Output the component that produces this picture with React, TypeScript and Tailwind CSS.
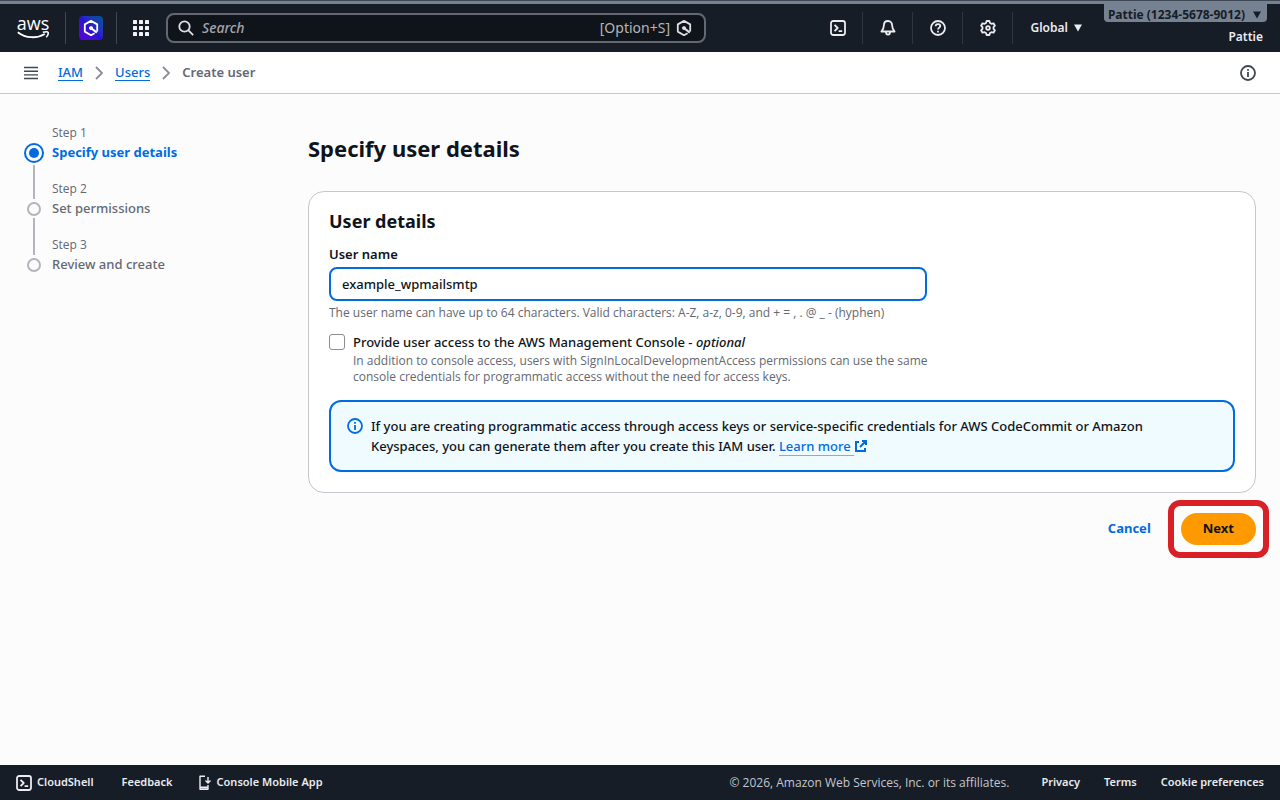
import { useState, type ReactNode } from "react";
import clsx from "clsx";

const steps = [
  { label: "Step 1", title: "Specify user details" },
  { label: "Step 2", title: "Set permissions" },
  { label: "Step 3", title: "Review and create" },
];

function Icon({ children, className }: { children: ReactNode; className?: string }) {
  return (
    <svg
      viewBox="0 0 16 16"
      fill="none"
      stroke="currentColor"
      strokeWidth="1.8"
      strokeLinejoin="round"
      className={clsx("size-4 shrink-0", className)}
      aria-hidden="true"
    >
      {children}
    </svg>
  );
}

function ShellIcon() {
  return (
    <Icon>
      <rect x="1" y="1" width="14" height="14" rx="2.2" />
      <path d="m4.5 4.8 3.2 3.2-3.2 3.2M8.6 11.2h3.6" />
    </Icon>
  );
}

function HexIcon({ className }: { className?: string }) {
  return (
    <Icon className={className}>
      <path d="M11.6 13.3 8 15.2 1.8 11.6V4.4L8 .9l6.2 3.5v7.2" />
      <path d="m8 8 5.8 4.6" strokeWidth="2.2" />
      <path d="M8 5.9 9.9 7v2.1L8 10.2 6.1 9.1V7z" fill="currentColor" stroke="none" />
    </Icon>
  );
}

function InfoIcon() {
  return (
    <Icon>
      <circle cx="8" cy="8" r="7" />
      <path d="M8 7v5M8 4v1.8" />
    </Icon>
  );
}

function Caret() {
  return (
    <svg viewBox="0 0 8 8" className="size-2 shrink-0" fill="currentColor" aria-hidden="true">
      <path d="M0 0.5h8L4 7.5z" />
    </svg>
  );
}

function Chevron() {
  return (
    <svg viewBox="0 0 8 14" className="h-3.5 w-2" fill="none" stroke="#8c8c94" strokeWidth="1.8" aria-hidden="true">
      <path d="m1 1 6 6-6 6" />
    </svg>
  );
}

function AwsLogo() {
  return (
    <a href="#" aria-label="AWS home" className="flex w-8 flex-col items-center text-white">
      <span className="font-['Open_Sans',sans-serif] text-[18px] leading-3 font-medium">aws</span>
      <svg viewBox="0 0 32 8" className="mt-0.5 h-2 w-8" fill="none" stroke="currentColor" aria-hidden="true">
        <path d="M.8 1.2c8 6.2 19 6.6 27 1.8" strokeWidth="1.8" />
        <path d="M25.8 1.3c2.5-.6 5-.5 5.3 0 .3.7-.3 3.3-1.9 5" strokeWidth="1.4" />
      </svg>
    </a>
  );
}

function Header() {
  return (
    <header className="border-t-3 border-[#768291] bg-[#161d26] text-[#ebebf0]">
      <div className="flex h-12 items-center">
        <div className="flex h-8 w-[66px] items-center border-r border-[#424650] pl-[17px]">
          <AwsLogo />
        </div>
        <div className="flex h-8 w-[51px] items-center justify-center border-r border-[#424650]">
          <button
            aria-label="Amazon Q"
            className="flex size-6 items-center justify-center rounded-[4px] bg-linear-to-tr from-[#5a00d8] via-[#2a12d0] to-[#0a5090] text-white"
          >
            <HexIcon />
          </button>
        </div>
        <button aria-label="Services" className="ml-4 text-[#f3f3f7]">
          <svg viewBox="0 0 16 16" className="size-4" fill="currentColor" aria-hidden="true">
            {[0, 6, 12].map((y) =>
              [0, 6, 12].map((x) => <rect key={`${x}-${y}`} x={x} y={y} width="4" height="4" rx="0.6" />),
            )}
          </svg>
        </button>
        <div className="ml-[17px] flex h-[30px] max-w-[540px] flex-1 items-center rounded-lg border-2 border-[#656871] bg-[#0f141a] pr-3 pl-2.5 text-[#b4b4bb]">
          <Icon className="text-[#dedee3]">
            <circle cx="6.5" cy="6.5" r="5.2" />
            <path d="m10.2 10.2 5 5" />
          </Icon>
          <input
            type="search"
            aria-label="Search"
            placeholder="Search"
            className="ml-2 min-w-0 flex-1 bg-transparent text-sm italic outline-none placeholder:text-[#a4a4ad]"
          />
          <span className="mr-1.5 text-sm font-normal">[Option+S]</span>
          <HexIcon className="text-[#dedee3]" />
        </div>
        <div className="ml-auto flex items-center">
          <button aria-label="CloudShell" className="flex h-8 w-[50px] items-center justify-center border-r border-[#2f3640]">
            <ShellIcon />
          </button>
          <button aria-label="Notifications" className="flex h-8 w-[50px] items-center justify-center border-r border-[#2f3640]">
            <Icon>
              <path d="M8 1C5.3 1 3.9 3 3.9 5.3c0 3.2-1 4.6-2.5 6.2h13.2c-1.5-1.6-2.5-3-2.5-6.2C12.1 3 10.7 1 8 1Z" />
              <path d="M6 12c0 3.5 4 3.5 4 0" />
            </Icon>
          </button>
          <button aria-label="Help" className="flex h-8 w-[50px] items-center justify-center border-r border-[#2f3640]">
            <Icon>
              <circle cx="8" cy="8" r="7" />
              <path d="M5.7 6.3c0-3 4.6-2.8 4.6-.2C10.3 7.7 8 7.6 8 9.6M8 10.8v1.6" />
            </Icon>
          </button>
          <button aria-label="Settings" className="flex h-8 w-[50px] items-center justify-center border-r border-[#2f3640]">
            <Icon>
              <path d="M6.6 1h2.8l.6 2 1.4.8 2.1-.5 1.4 2.4L13.5 7.2v1.6l1.4 1.5-1.4 2.4-2.1-.5-1.4.8-.6 2H6.6l-.6-2-1.4-.8-2.1.5-1.4-2.4 1.4-1.5V7.2L1.1 5.7l1.4-2.4 2.1.5L6 3z" />
              <circle cx="8" cy="8" r="1.8" />
            </Icon>
          </button>
          <button className="ml-[17px] flex items-center gap-1.5 text-xs font-semibold">
            Global <Caret />
          </button>
        </div>
        <div className="mr-[13px] ml-[22px] flex h-12 flex-col items-end">
          <button className="flex h-[18px] items-center gap-2 rounded-b-[4px] bg-[#768291] pt-1 pr-1.5 pl-1 text-xs font-bold text-[#161d26]">
            Pattie (1234-5678-9012) <Caret />
          </button>
          <span className="mt-[7px] mr-1 text-xs leading-4 font-semibold">Pattie</span>
        </div>
      </div>
    </header>
  );
}

function Breadcrumbs() {
  return (
    <div className="flex h-[42px] items-center border-b border-[#c6c6cd] bg-white px-6">
      <button aria-label="Open navigation" className="text-[#424650]">
        <svg viewBox="0 0 14 14" className="size-3.5" stroke="currentColor" strokeWidth="1.4" aria-hidden="true">
          <path d="M0 1.5h14M0 5.2h14M0 8.9h14M0 12.5h14" />
        </svg>
      </button>
      <nav aria-label="Breadcrumbs" className="ml-5 flex items-center gap-3">
        <a href="#" className="border-b border-[#006ce0] leading-4 text-[#006ce0]">
          IAM
        </a>
        <Chevron />
        <a href="#" className="border-b border-[#006ce0] leading-4 text-[#006ce0]">
          Users
        </a>
        <Chevron />
        <span className="font-semibold text-[#656871]">Create user</span>
      </nav>
      <button aria-label="Info" className="ml-auto text-[#424650]">
        <InfoIcon />
      </button>
    </div>
  );
}

function Stepper({ current }: { current: number }) {
  return (
    <nav aria-label="Steps" className="w-[260px] shrink-0 pt-[31px]">
      <ol>
        {steps.map((step, i) => (
          <li key={step.label} className="flex h-14 gap-2">
            <div className="flex w-5 flex-col items-center">
              <span className={clsx("w-0.5", i === 0 ? "h-[18px]" : "mb-[3px] h-[18px] bg-[#b4b4bb]")} />
              {i === current ? (
                <span className="flex size-5 shrink-0 items-center justify-center rounded-full border-2 border-[#006ce0]">
                  <span className="size-2.5 rounded-full bg-[#006ce0]" />
                </span>
              ) : (
                <span className="size-3.5 shrink-0 rounded-full border-2 border-[#b4b4bb]" />
              )}
              {i < steps.length - 1 && <span className="mt-0.5 w-0.5 flex-1 bg-[#b4b4bb]" />}
            </div>
            <div>
              <div className="font-['Open_Sans',sans-serif] text-xs leading-4 text-[#656871]">{step.label}</div>
              <div className={clsx("leading-[22px]", i === current ? "font-bold text-[#006ce0]" : "text-[#656871]")}>
                {step.title}
              </div>
            </div>
          </li>
        ))}
      </ol>
    </nav>
  );
}

function Hint({ id, className, children }: { id: string; className?: string; children: ReactNode }) {
  return (
    <p id={id} className={clsx("font-['Open_Sans',sans-serif] text-xs leading-4 font-normal text-[#656871]", className)}>
      {children}
    </p>
  );
}

function UserDetails() {
  const [userName, setUserName] = useState("example_wpmailsmtp");
  const [consoleAccess, setConsoleAccess] = useState(false);

  return (
    <section className="mt-7 rounded-2xl border border-[#c6c6cd] bg-white px-5 pt-[17px] pb-5">
      <h2 className="text-[18px] leading-6 font-bold">User details</h2>
      <div className="mt-[11px] max-w-[598px]">
        <label htmlFor="user-name" className="block leading-5 font-semibold">
          User name
        </label>
        <input
          id="user-name"
          type="text"
          value={userName}
          onChange={(e) => setUserName(e.target.value)}
          aria-describedby="user-name-hint"
          className="mt-[3px] h-[34px] w-full rounded-lg border-2 border-[#006ce0] bg-white px-[11px] outline-none"
        />
        <Hint id="user-name-hint" className="mt-1">
          The user name can have up to 64 characters. Valid characters: A-Z, a-z, 0-9, and + = , . @ _ - (hyphen)
        </Hint>
      </div>
      <div className="mt-[13px] flex max-w-[610px] gap-2">
        <input
          id="console-access"
          type="checkbox"
          checked={consoleAccess}
          onChange={(e) => setConsoleAccess(e.target.checked)}
          aria-describedby="console-access-hint"
          className="size-4 shrink-0 appearance-none rounded-[3px] border border-[#8c8c94] bg-white checked:bg-[#006ce0]"
        />
        <div>
          <label htmlFor="console-access" className="block leading-4">
            Provide user access to the AWS Management Console - <i>optional</i>
          </label>
          <Hint id="console-access-hint" className="mt-[3px]">
            In addition to console access, users with SignInLocalDevelopmentAccess permissions can use the same console
            credentials for programmatic access without the need for access keys.
          </Hint>
        </div>
      </div>
      <div className="mt-[15px] flex gap-2 rounded-xl border-2 border-[#006ce0] bg-[#f0fbff] px-4 py-3.5">
        <div className="flex h-5 items-center text-[#006ce0]">
          <InfoIcon />
        </div>
        <p className="max-w-[820px] leading-5">
          If you are creating programmatic access through access keys or service-specific credentials for AWS
          CodeCommit or Amazon Keyspaces, you can generate them after you create this IAM user.{" "}
          <a href="#" className="text-[#006ce0] underline decoration-[#75b0f0] underline-offset-4">
            Learn more&nbsp;
          </a>
          <svg
            viewBox="0 0 14 14"
            className="inline size-3.5 align-[-2px] text-[#006ce0]"
            fill="none"
            stroke="currentColor"
            strokeWidth="2"
            aria-hidden="true"
          >
            <path d="M5 3H2v9h9V9M6 8l6-6M8 2h4v4" />
          </svg>
        </p>
      </div>
    </section>
  );
}

function Footer() {
  return (
    <footer className="flex h-[35px] items-center bg-[#161d26] px-4 text-[11px] font-semibold text-[#ebebf0]">
      <button className="flex items-center gap-[5px]">
        <ShellIcon />
        CloudShell
      </button>
      <a href="#" className="ml-7">
        Feedback
      </a>
      <a href="#" className="ml-6 flex items-center gap-1">
        <Icon>
          <path d="M8 1.2H3v13h8V10" strokeWidth="1.4" />
          <path d="M3 12.5h8" strokeWidth="2" />
          <path d="M11 2v6M8.5 5.5 11 8l2.5-2.5" strokeWidth="1.4" />
        </Icon>
        Console Mobile App
      </a>
      <div className="ml-auto flex items-center gap-6">
        <span className="mr-2 font-['Open_Sans',sans-serif] text-xs font-normal text-[#c6c6cd]">
          © 2026, Amazon Web Services, Inc. or its affiliates.
        </span>
        <a href="#">Privacy</a>
        <a href="#">Terms</a>
        <button>Cookie preferences</button>
      </div>
    </footer>
  );
}

export default function App() {
  return (
    <div className="flex min-h-screen flex-col border-t border-[#3f4955] bg-[#fcfcfd] font-['Noto_Sans',sans-serif] text-[13px] font-medium text-[#0f141a]">
      <Header />
      <Breadcrumbs />
      <div className="flex flex-1 gap-6 px-6">
        <Stepper current={0} />
        <main className="min-w-0 flex-1 pt-[39px]">
          <h1 className="text-[22px] leading-[30px] font-bold">Specify user details</h1>
          <UserDetails />
          <div className="mt-5 flex items-center justify-end gap-[30px] font-bold">
            <button className="text-[#006ce0]">Cancel</button>
            <div className="relative">
              <button className="h-8 rounded-full bg-[#ff9900] px-[22px] text-[#0f141a]">Next</button>
              <span className="pointer-events-none absolute -inset-[13px] rounded-xl border-6 border-[#d92027]" />
            </div>
          </div>
        </main>
      </div>
      <Footer />
    </div>
  );
}
